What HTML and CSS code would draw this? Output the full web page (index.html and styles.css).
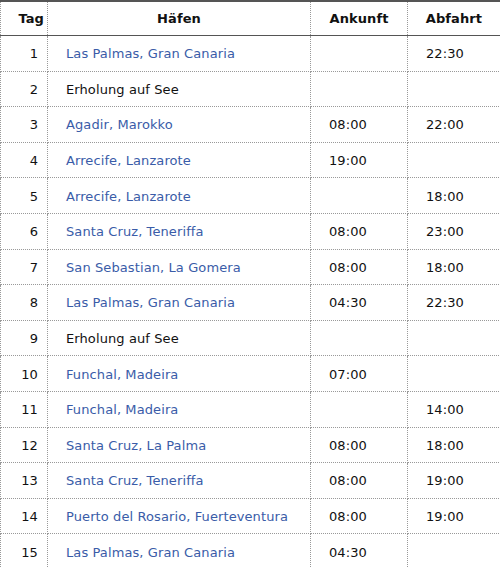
FILE: index.html
```html
<!DOCTYPE html>
<html lang="de">
<head>
<meta charset="utf-8">
<title>Reiseroute</title>
<link rel="stylesheet" href="styles.css">
</head>
<body>
<table class="route">
  <colgroup>
    <col class="w-day">
    <col class="w-port">
    <col class="w-arr">
    <col class="w-dep">
  </colgroup>
  <thead>
    <tr>
      <th class="c-day">Tag</th>
      <th class="c-port">Häfen</th>
      <th class="c-time">Ankunft</th>
      <th class="c-time">Abfahrt</th>
    </tr>
  </thead>
  <tbody>
    <tr><td class="c-day">1</td><td class="c-port"><a href="#">Las Palmas, Gran Canaria</a></td><td class="c-time"></td><td class="c-time">22:30</td></tr>
    <tr><td class="c-day">2</td><td class="c-port">Erholung auf See</td><td class="c-time"></td><td class="c-time"></td></tr>
    <tr><td class="c-day">3</td><td class="c-port"><a href="#">Agadir, Marokko</a></td><td class="c-time">08:00</td><td class="c-time">22:00</td></tr>
    <tr><td class="c-day">4</td><td class="c-port"><a href="#">Arrecife, Lanzarote</a></td><td class="c-time">19:00</td><td class="c-time"></td></tr>
    <tr><td class="c-day">5</td><td class="c-port"><a href="#">Arrecife, Lanzarote</a></td><td class="c-time"></td><td class="c-time">18:00</td></tr>
    <tr><td class="c-day">6</td><td class="c-port"><a href="#">Santa Cruz, Teneriffa</a></td><td class="c-time">08:00</td><td class="c-time">23:00</td></tr>
    <tr><td class="c-day">7</td><td class="c-port"><a href="#">San Sebastian, La Gomera</a></td><td class="c-time">08:00</td><td class="c-time">18:00</td></tr>
    <tr><td class="c-day">8</td><td class="c-port"><a href="#">Las Palmas, Gran Canaria</a></td><td class="c-time">04:30</td><td class="c-time">22:30</td></tr>
    <tr><td class="c-day">9</td><td class="c-port">Erholung auf See</td><td class="c-time"></td><td class="c-time"></td></tr>
    <tr><td class="c-day">10</td><td class="c-port"><a href="#">Funchal, Madeira</a></td><td class="c-time">07:00</td><td class="c-time"></td></tr>
    <tr><td class="c-day">11</td><td class="c-port"><a href="#">Funchal, Madeira</a></td><td class="c-time"></td><td class="c-time">14:00</td></tr>
    <tr><td class="c-day">12</td><td class="c-port"><a href="#">Santa Cruz, La Palma</a></td><td class="c-time">08:00</td><td class="c-time">18:00</td></tr>
    <tr><td class="c-day">13</td><td class="c-port"><a href="#">Santa Cruz, Teneriffa</a></td><td class="c-time">08:00</td><td class="c-time">19:00</td></tr>
    <tr><td class="c-day">14</td><td class="c-port"><a href="#">Puerto del Rosario, Fuerteventura</a></td><td class="c-time">08:00</td><td class="c-time">19:00</td></tr>
    <tr><td class="c-day">15</td><td class="c-port"><a href="#">Las Palmas, Gran Canaria</a></td><td class="c-time">04:30</td><td class="c-time"></td></tr>
  </tbody>
</table>
</body>
</html>
```

FILE: styles.css
```css
html, body {
  margin: 0;
  padding: 0;
  background: #fff;
}

.route {
  width: 500px;
  border-collapse: collapse;
  font-family: "DejaVu Sans", Verdana, sans-serif;
  font-size: 13px;
  letter-spacing: 0.1px;
  color: #111;
  border-top: 2px solid #555;
  border-bottom: 2px solid #555;
  table-layout: fixed;
}

.w-day { width: 47px; }
.w-port { width: 263px; }
.w-arr { width: 97px; }
.w-dep { width: 93px; }

.route th,
.route td {
  border: 1px dotted #999;
  padding: 0;
  white-space: nowrap;
}

.route th {
  height: 33px;
  font-weight: bold;
  text-align: center;
  border-bottom: 1px solid #555;
}

.route td {
  height: 33.6px;
  padding-top: 1px;
}

.route th.c-day {
  text-align: right;
  padding-right: 3px;
}

.route td.c-day {
  text-align: right;
  padding-right: 9px;
}

.route td.c-port {
  padding-left: 18px;
}

.route td.c-time {
  padding-left: 18px;
}

.route a {
  color: #3a5ca8;
  text-decoration: none;
}
```
